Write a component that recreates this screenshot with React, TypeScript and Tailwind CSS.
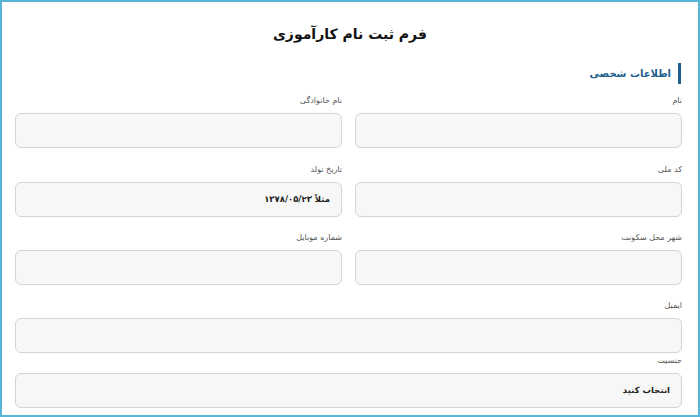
import React from "react";

const font = { fontFamily: '"DejaVu Sans", "Noto Sans", sans-serif' };

function Field({
  label,
  value,
  className = "",
}: {
  label: string;
  value?: string;
  className?: string;
}) {
  return (
    <div className={"flex flex-col " + className}>
      <div className="h-[12px] mb-[6px] text-[8px] leading-[12px] text-[#555]">{label}</div>
      <div className="h-[35px] rounded-[6px] border border-[#d4d4d4] bg-[#f7f7f7] flex items-center pr-[11px] text-[8.5px] font-bold text-[#222]">
        {value}
      </div>
    </div>
  );
}

export default function App() {
  return (
    <div
      dir="rtl"
      style={font}
      className="w-[700px] h-[417px] border-2 border-[#5ab4d6] bg-white flex flex-col overflow-hidden"
    >
      <h1 className="mt-[20px] h-[24px] text-center text-[14px] leading-[24px] font-bold text-[#111]">
        فرم ثبت نام کارآموزی
      </h1>
      <div className="mt-[17px] mr-[17px] flex items-center h-[21px]">
        <div className="w-[3px] h-[21px] bg-[#1d5f8c]" />
        <div className="mr-[7px] text-[10px] font-bold text-[#1d5f8c]">اطلاعات شخصی</div>
      </div>
      <div className="pr-[16px] pl-[13px] mt-[11px] flex flex-col">
        <div className="grid grid-cols-2 gap-x-[13px]">
          <Field label="نام" />
          <Field label="نام خانوادگی" />
        </div>
        <div className="grid grid-cols-2 gap-x-[13px] mt-[16px]">
          <Field label="کد ملی" />
          <Field label="تاریخ تولد" value="مثلاً ۱۳۷۸/۰۵/۲۳" />
        </div>
        <div className="grid grid-cols-2 gap-x-[13px] mt-[15px]">
          <Field label="شهر محل سکونت" />
          <Field label="شماره موبایل" />
        </div>
        <Field label="ایمیل" className="mt-[15px]" />
        <Field label="جنسیت" className="mt-[2px]" value="انتخاب کنید" />
      </div>
    </div>
  );
}
